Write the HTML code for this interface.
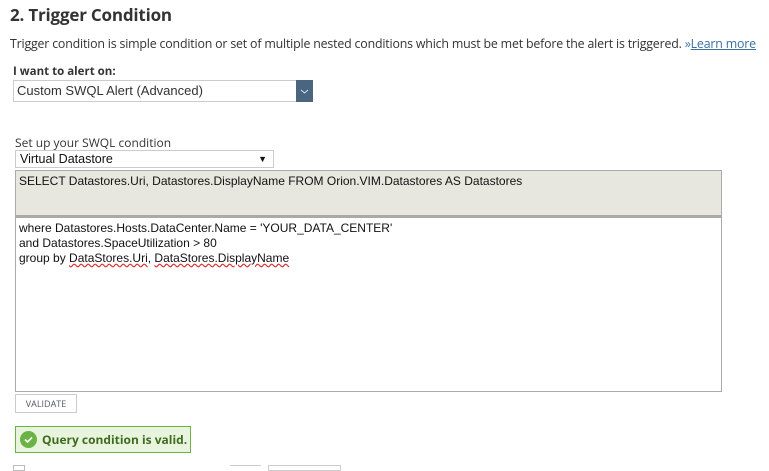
<!DOCTYPE html>
<html><head><style>
body{margin:0;width:769px;height:467px;background:#fff;position:relative;overflow:hidden;font-family:"Open Sans","DejaVu Sans","Liberation Sans",sans-serif;color:#333}
.a{position:absolute}
.ar{font-family:"Liberation Sans",Arial,sans-serif}
</style></head><body>
<div class="a" style="left:10px;top:3px;font-size:17px;font-weight:bold;color:#333;letter-spacing:-0.2px">2. Trigger Condition</div>
<div class="a" style="left:10px;top:35px;font-size:12.4px;white-space:nowrap;letter-spacing:-0.19px">Trigger condition is simple condition or set of multiple nested conditions which must be met before the alert is triggered. <span style="color:#3a6fa5">»<u>Learn more</u></span></div>
<div class="a" style="left:13px;top:64px;font-size:11.5px;font-weight:bold">I want to alert on:</div>
<div class="a ar" style="left:13px;top:80px;border:1px solid #ccc;border-right:none;font-size:13px;line-height:20px;padding-left:3px;box-sizing:border-box;width:283px;height:22px">Custom SWQL Alert (Advanced)</div>
<div class="a" style="left:296px;top:80px;width:17px;height:22px;background:#4a6580"><svg width="17" height="22"><path d="M5 10l3.5 3 3.5-3" stroke="#dde" fill="none" stroke-width="1"/></svg></div>
<div class="a" style="left:15px;top:134px;font-size:12px">Set up your SWQL condition</div>
<div class="a ar" style="left:15px;top:150px;width:259px;height:18px;border:1px solid #ccc;box-sizing:border-box;font-size:12.5px;line-height:16px;padding-left:4px;color:#111">Virtual Datastore<span style="position:absolute;right:6px;font-size:9px">▼</span></div>
<div class="a ar" style="left:15px;top:170px;width:707px;height:48px;background:#e7e7df;border:1px solid #aaa;border-bottom:3px solid #aaa;box-sizing:border-box;font-size:12px;padding:3px 3px;color:#111">SELECT Datastores.Uri, Datastores.DisplayName FROM Orion.VIM.Datastores AS Datastores</div>
<div class="a ar" style="left:15px;top:218px;width:707px;height:174px;border:1px solid #aaa;border-top:none;box-sizing:border-box;font-size:12px;line-height:15px;padding:3px 3px;color:#111">where Datastores.Hosts.DataCenter.Name = 'YOUR_DATA_CENTER'<br>and Datastores.SpaceUtilization &gt; 80<br>group by <span style="text-decoration:underline wavy #d33">DataStores.Uri</span>, <span style="text-decoration:underline wavy #d33">DataStores.DisplayName</span></div>
<div class="a" style="left:15px;top:394px;width:62px;height:19px;border:1px solid #ccc;box-sizing:border-box;font-size:9px;line-height:17px;text-align:center;color:#556">VALIDATE</div>
<div class="a" style="left:15px;top:426px;width:176px;height:27px;border:1px solid #6ab344;background:#e8f4dd;box-sizing:border-box"></div>
<div class="a" style="left:20px;top:431px;width:17px;height:17px;border-radius:50%;background:#6ab344"><svg width="17" height="17"><path d="M5 8.5l2.5 2.5 4.5-4.5" stroke="#fff" fill="none" stroke-width="1.6"/></svg></div>
<div class="a" style="left:42px;top:431px;font-size:12px;font-weight:bold;color:#3d6b1f">Query condition is valid.</div>
<div class="a" style="left:13px;top:465px;width:10px;height:4px;border:1px solid #bbb"></div>
<div class="a" style="left:230px;top:465px;width:31px;height:4px;border-top:1px solid #ccc"></div>
<div class="a" style="left:268px;top:465px;width:71px;height:4px;border:1px solid #ccc"></div>
</body></html>
